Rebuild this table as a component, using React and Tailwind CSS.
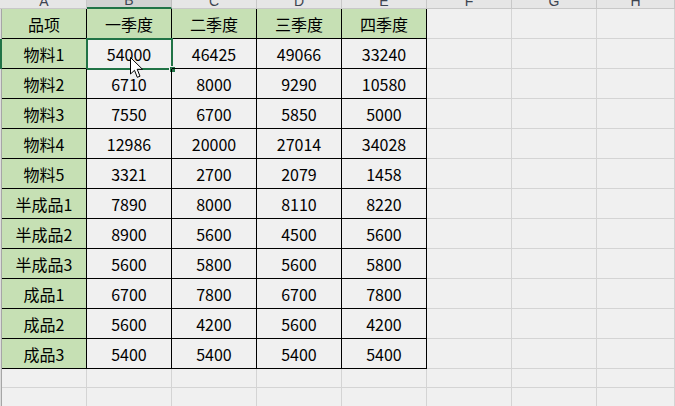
import React from "react";

const letters = ["A", "B", "C", "D", "E", "F", "G", "H"];

const rows = [
  ["品项", "一季度", "二季度", "三季度", "四季度"],
  ["物料1", "54000", "46425", "49066", "33240"],
  ["物料2", "6710", "8000", "9290", "10580"],
  ["物料3", "7550", "6700", "5850", "5000"],
  ["物料4", "12986", "20000", "27014", "34028"],
  ["物料5", "3321", "2700", "2079", "1458"],
  ["半成品1", "7890", "8000", "8110", "8220"],
  ["半成品2", "8900", "5600", "4500", "5600"],
  ["半成品3", "5600", "5800", "5600", "5800"],
  ["成品1", "6700", "7800", "6700", "7800"],
  ["成品2", "5600", "4200", "5600", "4200"],
  ["成品3", "5400", "5400", "5400", "5400"],
];

const Cursor = () => (
  <svg
    className="absolute left-[43px] top-[18px] pointer-events-none"
    width="14"
    height="22"
    viewBox="0 0 14 22"
  >
    <path
      d="M0.5 0.5 L0.5 17 L4.5 13.3 L7.3 20.3 L10 19.2 L7.2 12.3 L12.5 12.3 Z"
      fill="#fff"
      stroke="#000"
      strokeWidth="1"
      strokeLinejoin="miter"
    />
  </svg>
);

const Cell = ({ value, ri, ci }) => {
  const inTable = ci < 5;
  const header = ri === 0 || ci === 0;
  const selected = ri === 1 && ci === 1;
  const w = ci === 7 ? "flex-1" : "w-[85px]";
  return (
    <div
      className={`${w} relative flex items-center justify-center border-r border-b ${
        inTable ? "border-black" : "border-[#d4d4d4]"
      } ${inTable && header ? "bg-[#c6e0b4]" : ""}`}
    >
      {value}
      {selected && (
        <>
          <div className="absolute left-[-1px] top-[-1px] w-[87px] h-[32px] border-2 border-[#217346] pointer-events-none" />
          <div className="absolute left-[82px] top-[27px] w-[5px] h-[5px] bg-[#217346] border border-[#f0f0f0] box-content" />
          <Cursor />
        </>
      )}
    </div>
  );
};

export default function App() {
  return (
    <div className="w-[675px] h-[406px] overflow-hidden bg-[#f0f0f0] text-black text-[16px] font-['Noto_Sans_CJK_SC',sans-serif]">
      <div className="flex h-[9px]">
        <div className="w-[2px] bg-[#e6e6e6] border-b border-[#c8c8c8]" />
        {letters.map((l, i) => (
          <div
            key={l}
            className={`${i === 7 ? "flex-1" : "w-[85px]"} overflow-hidden flex items-end justify-center border-r ${
              i === 1
                ? "bg-[#d2d2d2] border-b-2 border-b-[#217346] border-r-[#bdbdbd]"
                : "bg-[#e6e6e6] border-b border-[#c8c8c8]"
            }`}
          >
            <span className="text-[14px] leading-[14px] text-[#3d4450] font-['Liberation_Sans',sans-serif]">
              {l}
            </span>
          </div>
        ))}
      </div>

      {rows.map((r, ri) => (
        <div key={ri} className="flex h-[30px]">
          <div
            className={`w-[2px] border-r ${
              ri === 1 ? "bg-[#217346] border-[#217346]" : "bg-[#dcdcdc] border-[#a6a6a6]"
            }`}
          />
          {letters.map((l, ci) => (
            <Cell key={l} value={r[ci] || ""} ri={ri} ci={ci} />
          ))}
        </div>
      ))}

      {[0, 1].map((e) => (
        <div key={e} className="flex h-[19px]">
          <div className="w-[2px] bg-[#dcdcdc] border-r border-[#a6a6a6]" />
          {letters.map((l, ci) => (
            <div
              key={l}
              className={`${ci === 7 ? "flex-1" : "w-[85px]"} border-r border-b border-[#d4d4d4]`}
            />
          ))}
        </div>
      ))}
    </div>
  );
}
